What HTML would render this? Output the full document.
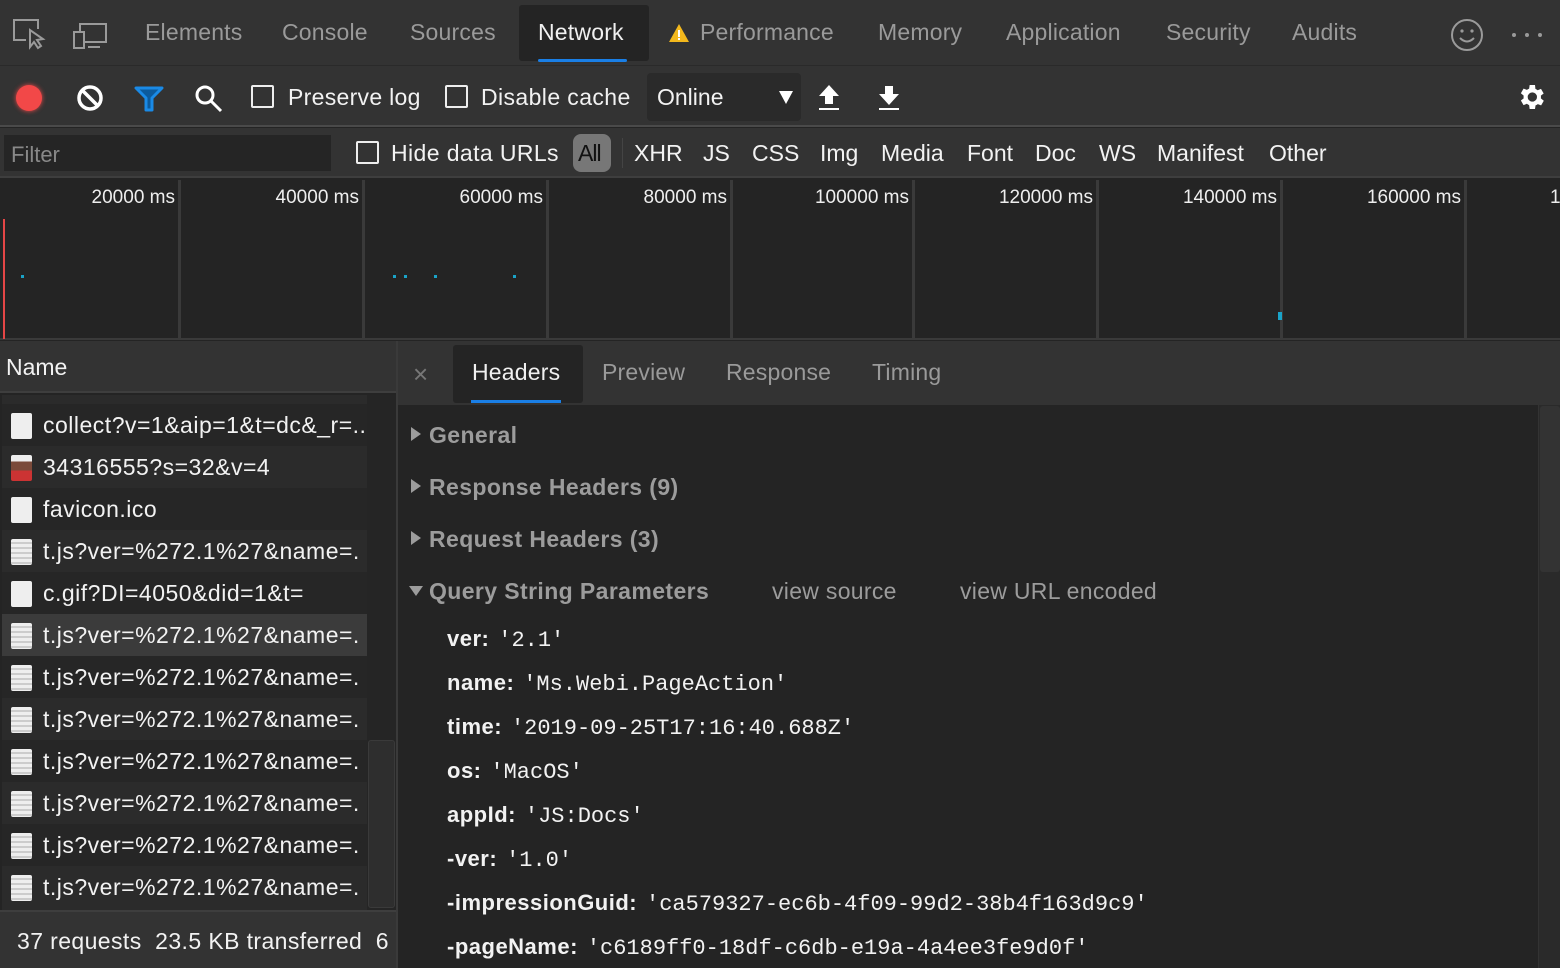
<!DOCTYPE html>
<html><head><meta charset="utf-8"><style>
*{margin:0;padding:0;box-sizing:border-box}
body{width:1560px;height:968px;overflow:hidden;background:#242424;font-family:"Liberation Sans",sans-serif;color:#e8e8e8;position:relative}
.a{position:absolute;white-space:nowrap}
.t{font-size:23px;color:#9a9a9a;top:19px;letter-spacing:0.2px}
.w{color:#f0f0f0}
.cb{position:absolute;width:23px;height:23px;border:2px solid #eee;border-radius:2px}
.row{position:absolute;left:2px;width:365px;height:42px;font-size:23px;color:#f2f2f2;overflow:hidden}
.row span{position:absolute;left:41px;top:8px;letter-spacing:0.5px}
.ic{position:absolute;left:9px;top:9px;width:21px;height:26px;background:#eee;border-radius:2px}
.ic.js{background:repeating-linear-gradient(#eee 0 3px,#ccc 3px 5px);}
.k{font-weight:bold;font-size:22px;color:#f2f2f2;letter-spacing:0.5px}
.v{font-family:"Liberation Mono",monospace;font-size:22px;color:#f2f2f2}
.sec{font-weight:bold;font-size:23px;color:#9c9c9c;letter-spacing:0.4px}
.tri{display:inline-block;width:0;height:0;border-top:7px solid transparent;border-bottom:7px solid transparent;border-left:10px solid #9c9c9c;margin-right:8px;vertical-align:2px}
.trid{display:inline-block;width:0;height:0;border-left:7px solid transparent;border-right:7px solid transparent;border-top:10px solid #9c9c9c;margin-right:6px;vertical-align:3px}
.g{position:absolute;top:180px;width:3px;height:159px;background:#3a3a3a}
.ms{position:absolute;top:187px;font-size:19px;color:#eee}
.f{position:absolute;top:140px;font-size:23px;color:#f2f2f2}
</style></head><body>
<div class="a" style="left:0;top:0;width:1560px;height:66px;background:#333;border-bottom:1px solid #2a2a2a"></div>
<svg class="a" style="left:12px;top:18px" width="34" height="32" viewBox="0 0 34 32"><path d="M14 22H2V2h24v9" fill="none" stroke="#9a9a9a" stroke-width="2"/><path d="M18 12l0 17 4-5 4 6 3-2-4-6 6-1z" fill="none" stroke="#9a9a9a" stroke-width="2"/></svg>
<svg class="a" style="left:72px;top:22px" width="36" height="28" viewBox="0 0 36 28"><rect x="8" y="2" width="26" height="18" fill="none" stroke="#9a9a9a" stroke-width="2"/><rect x="2" y="10" width="10" height="16" fill="#333" stroke="#9a9a9a" stroke-width="2"/><path d="M16 25h12" stroke="#9a9a9a" stroke-width="2"/></svg>
<span class="a t" style="left:145px">Elements</span>
<span class="a t" style="left:282px">Console</span>
<span class="a t" style="left:410px">Sources</span>
<div class="a" style="left:519px;top:5px;width:130px;height:56px;background:#242424;border-radius:3px"></div>
<span class="a t w" style="left:538px">Network</span>
<div class="a" style="left:538px;top:59px;width:89px;height:3px;background:#1a7fe6;border-radius:2px"></div>
<svg class="a" style="left:668px;top:23px" width="22" height="20" viewBox="0 0 22 20"><path d="M11 1L21 19H1z" fill="#f3b81c"/><rect x="10" y="7" width="2" height="7" fill="#fff"/><rect x="10" y="15" width="2" height="2" fill="#fff"/></svg>
<span class="a t" style="left:700px">Performance</span>
<span class="a t" style="left:878px">Memory</span>
<span class="a t" style="left:1006px">Application</span>
<span class="a t" style="left:1166px">Security</span>
<span class="a t" style="left:1292px">Audits</span>
<svg class="a" style="left:1450px;top:18px" width="34" height="34" viewBox="0 0 34 34"><circle cx="17" cy="17" r="15" fill="none" stroke="#9a9a9a" stroke-width="2"/><circle cx="12" cy="13" r="1.6" fill="#9a9a9a"/><circle cx="22" cy="13" r="1.6" fill="#9a9a9a"/><path d="M10 20q7 7 14 0" fill="none" stroke="#9a9a9a" stroke-width="2"/></svg>
<svg class="a" style="left:1510px;top:31px" width="36" height="8"><circle cx="4" cy="4" r="2" fill="#9a9a9a"/><circle cx="17" cy="4" r="2" fill="#9a9a9a"/><circle cx="30" cy="4" r="2" fill="#9a9a9a"/></svg>
<div class="a" style="left:0;top:66px;width:1560px;height:61px;background:#333;border-bottom:2px solid #4a4a4a"></div>
<div class="a" style="left:16px;top:85px;width:26px;height:26px;border-radius:50%;background:#f24848;box-shadow:0 0 5px #f24848"></div>
<svg class="a" style="left:76px;top:84px" width="28" height="28" viewBox="0 0 28 28"><circle cx="14" cy="14" r="11" fill="none" stroke="#fff" stroke-width="3.5"/><path d="M6 6l16 16" stroke="#fff" stroke-width="3.5"/></svg>
<svg class="a" style="left:134px;top:86px" width="30" height="26" viewBox="0 0 30 26"><path d="M2 2h26L18 12v12h-6V12z" fill="#0c5a9c" stroke="#1a8ae6" stroke-width="3" stroke-linejoin="round"/></svg>
<svg class="a" style="left:194px;top:84px" width="30" height="30" viewBox="0 0 30 30"><circle cx="11" cy="11" r="8" fill="none" stroke="#fff" stroke-width="3"/><path d="M17 17l10 10" stroke="#fff" stroke-width="3"/></svg>
<div class="cb" style="left:251px;top:85px"></div>
<span class="a" style="left:288px;top:84px;font-size:23px;color:#f2f2f2;letter-spacing:0.3px">Preserve log</span>
<div class="cb" style="left:445px;top:85px"></div>
<span class="a" style="left:481px;top:84px;font-size:23px;color:#f2f2f2;letter-spacing:0.4px">Disable cache</span>
<div class="a" style="left:647px;top:73px;width:154px;height:48px;background:#2a2a2a;border-radius:4px"></div>
<span class="a" style="left:657px;top:84px;font-size:23px;color:#f2f2f2">Online</span>
<div class="a" style="left:779px;top:91px;width:0;height:0;border-left:7px solid transparent;border-right:7px solid transparent;border-top:13px solid #fff"></div>
<svg class="a" style="left:818px;top:84px" width="22" height="28" viewBox="0 0 22 28"><path d="M11 1L21 12h-6v8H7v-8H1z" fill="#fff"/><rect x="1" y="24" width="20" height="2" fill="#fff"/></svg>
<svg class="a" style="left:878px;top:84px" width="22" height="28" viewBox="0 0 22 28"><path d="M11 21L21 10h-6V2H7v8H1z" fill="#fff"/><rect x="1" y="24" width="20" height="2" fill="#fff"/></svg>
<svg class="a" style="left:1515px;top:81px" width="32" height="32" viewBox="0 0 24 24"><path fill="#fff" d="M19.4 13a7.5 7.5 0 000-2l2.1-1.6-2-3.5-2.5 1a7 7 0 00-1.7-1L15 3h-4l-.4 2.7a7 7 0 00-1.7 1l-2.5-1-2 3.5L6.5 11a7.5 7.5 0 000 2l-2.1 1.6 2 3.5 2.5-1a7 7 0 001.7 1L11 21h4l.4-2.7a7 7 0 001.7-1l2.5 1 2-3.5zM13 15.5a3.5 3.5 0 110-7 3.5 3.5 0 010 7z"/></svg>
<div class="a" style="left:0;top:128px;width:1560px;height:50px;background:#333;border-bottom:2px solid #3e3e3e"></div>
<div class="a" style="left:4px;top:135px;width:327px;height:36px;background:#252525"></div>
<span class="a" style="left:11px;top:142px;font-size:22px;color:#888">Filter</span>
<div class="cb" style="left:356px;top:141px"></div>
<span class="f" style="left:391px;letter-spacing:0.4px">Hide data URLs</span>
<div class="a" style="left:573px;top:134px;width:38px;height:38px;background:#777;border-radius:8px"></div>
<span class="a" style="left:578px;top:140px;font-size:23px;color:#111;letter-spacing:-1px">All</span>
<div class="a" style="left:622px;top:138px;width:1px;height:30px;background:#444"></div>
<span class="f" style="left:634px">XHR</span>
<span class="f" style="left:703px">JS</span>
<span class="f" style="left:752px">CSS</span>
<span class="f" style="left:820px">Img</span>
<span class="f" style="left:881px">Media</span>
<span class="f" style="left:967px">Font</span>
<span class="f" style="left:1035px">Doc</span>
<span class="f" style="left:1099px">WS</span>
<span class="f" style="left:1157px">Manifest</span>
<span class="f" style="left:1269px">Other</span>
<div class="a" style="left:0;top:179px;width:1560px;height:161px;background:#242424;border-bottom:2px solid #3a3a3a"></div>
<div class="g" style="left:178px"></div><div class="g" style="left:362px"></div><div class="g" style="left:546px"></div><div class="g" style="left:730px"></div><div class="g" style="left:912px"></div><div class="g" style="left:1096px"></div><div class="g" style="left:1280px"></div><div class="g" style="left:1464px"></div>
<span class="ms" style="right:1385px">20000 ms</span>
<span class="ms" style="right:1201px">40000 ms</span>
<span class="ms" style="right:1017px">60000 ms</span>
<span class="ms" style="right:833px">80000 ms</span>
<span class="ms" style="right:651px">100000 ms</span>
<span class="ms" style="right:467px">120000 ms</span>
<span class="ms" style="right:283px">140000 ms</span>
<span class="ms" style="right:99px">160000 ms</span>
<span class="ms" style="left:1550px">1</span>
<div class="a" style="left:3px;top:219px;width:2px;height:120px;background:#e54646"></div>
<div class="a" style="left:21px;top:275px;width:3px;height:3px;background:#1aa3c8"></div>
<div class="a" style="left:393px;top:275px;width:3px;height:3px;background:#1aa3c8"></div>
<div class="a" style="left:404px;top:275px;width:3px;height:3px;background:#1aa3c8"></div>
<div class="a" style="left:434px;top:275px;width:3px;height:3px;background:#1aa3c8"></div>
<div class="a" style="left:513px;top:275px;width:3px;height:3px;background:#1aa3c8"></div>
<div class="a" style="left:1278px;top:312px;width:4px;height:8px;background:#1aa3c8"></div>
<div class="a" style="left:0;top:341px;width:396px;height:52px;background:#333;border-bottom:2px solid #3e3e3e"></div>
<span class="a" style="left:6px;top:354px;font-size:23px;color:#f2f2f2">Name</span>
<div class="a" style="left:396px;top:341px;width:2px;height:627px;background:#3a3a3a"></div>
<div class="a" style="left:367px;top:395px;width:29px;height:515px;background:#252525"></div>
<div class="a" style="left:368px;top:740px;width:27px;height:168px;background:#2e2e2e;border:1px solid #3a3a3a;border-radius:3px"></div>
<div class="row" style="top:395px;height:9px;background:#2b2b2b"></div>
<div class="row" style="top:404px;background:#262626"><div class="ic"></div><span>collect?v=1&amp;aip=1&amp;t=dc&amp;_r=..</span></div>
<div class="row" style="top:446px;background:#2b2b2b"><div class="ic" style="background:linear-gradient(#eee 0 25%,#7a4a3a 25% 60%,#c33 60%)"></div><span>34316555?s=32&amp;v=4</span></div>
<div class="row" style="top:488px;background:#262626"><div class="ic"></div><span>favicon.ico</span></div>
<div class="row" style="top:530px;background:#2b2b2b"><div class="ic js"></div><span>t.js?ver=%272.1%27&amp;name=.</span></div>
<div class="row" style="top:572px;background:#262626"><div class="ic"></div><span>c.gif?DI=4050&amp;did=1&amp;t=</span></div>
<div class="row" style="top:614px;background:#3b3b3b"><div class="ic js"></div><span>t.js?ver=%272.1%27&amp;name=.</span></div>
<div class="row" style="top:656px;background:#262626"><div class="ic js"></div><span>t.js?ver=%272.1%27&amp;name=.</span></div>
<div class="row" style="top:698px;background:#2b2b2b"><div class="ic js"></div><span>t.js?ver=%272.1%27&amp;name=.</span></div>
<div class="row" style="top:740px;background:#262626"><div class="ic js"></div><span>t.js?ver=%272.1%27&amp;name=.</span></div>
<div class="row" style="top:782px;background:#2b2b2b"><div class="ic js"></div><span>t.js?ver=%272.1%27&amp;name=.</span></div>
<div class="row" style="top:824px;background:#262626"><div class="ic js"></div><span>t.js?ver=%272.1%27&amp;name=.</span></div>
<div class="row" style="top:866px;background:#2b2b2b;height:44px"><div class="ic js"></div><span>t.js?ver=%272.1%27&amp;name=.</span></div>
<div class="a" style="left:0;top:910px;width:396px;height:58px;background:#333;border-top:2px solid #3e3e3e"></div>
<span class="a" style="left:17px;top:928px;font-size:23px;color:#f2f2f2;letter-spacing:0.4px">37 requests&nbsp; 23.5 KB transferred&nbsp; 6</span>
<div class="a" style="left:398px;top:341px;width:1162px;height:64px;background:#333"></div>
<span class="a" style="left:413px;top:359px;font-size:26px;color:#777">×</span>
<div class="a" style="left:453px;top:345px;width:130px;height:58px;background:#242424;border-radius:3px"></div>
<span class="a t w" style="left:472px;top:359px">Headers</span>
<div class="a" style="left:471px;top:400px;width:90px;height:3px;background:#1a7fe6"></div>
<span class="a t" style="left:602px;top:359px">Preview</span>
<span class="a t" style="left:726px;top:359px">Response</span>
<span class="a t" style="left:872px;top:359px">Timing</span>
<div class="a" style="left:1538px;top:405px;width:22px;height:563px;background:#2a2a2a;border-left:1px solid #333"></div>
<div class="a" style="left:1540px;top:406px;width:20px;height:166px;background:#333;border-radius:3px"></div>
<span class="a sec" style="left:411px;top:422px"><i class="tri"></i>General</span>
<span class="a sec" style="left:411px;top:474px"><i class="tri"></i>Response Headers (9)</span>
<span class="a sec" style="left:411px;top:526px"><i class="tri"></i>Request Headers (3)</span>
<span class="a sec" style="left:409px;top:578px"><i class="trid"></i>Query String Parameters</span>
<span class="a" style="left:772px;top:578px;font-size:23px;color:#9c9c9c;letter-spacing:0.3px">view source</span>
<span class="a" style="left:960px;top:578px;font-size:23px;color:#9c9c9c;letter-spacing:0.3px">view URL encoded</span>
<div class="a" style="left:447px;top:626px"><span class="k">ver:</span>&nbsp; <span class="v">'2.1'</span></div>
<div class="a" style="left:447px;top:670px"><span class="k">name:</span>&nbsp; <span class="v">'Ms.Webi.PageAction'</span></div>
<div class="a" style="left:447px;top:714px"><span class="k">time:</span>&nbsp; <span class="v">'2019-09-25T17:16:40.688Z'</span></div>
<div class="a" style="left:447px;top:758px"><span class="k">os:</span>&nbsp; <span class="v">'MacOS'</span></div>
<div class="a" style="left:447px;top:802px"><span class="k">appId:</span>&nbsp; <span class="v">'JS:Docs'</span></div>
<div class="a" style="left:447px;top:846px"><span class="k">-ver:</span>&nbsp; <span class="v">'1.0'</span></div>
<div class="a" style="left:447px;top:890px"><span class="k">-impressionGuid:</span>&nbsp; <span class="v">'ca579327-ec6b-4f09-99d2-38b4f163d9c9'</span></div>
<div class="a" style="left:447px;top:934px"><span class="k">-pageName:</span>&nbsp; <span class="v">'c6189ff0-18df-c6db-e19a-4a4ee3fe9d0f'</span></div>
</body></html>
